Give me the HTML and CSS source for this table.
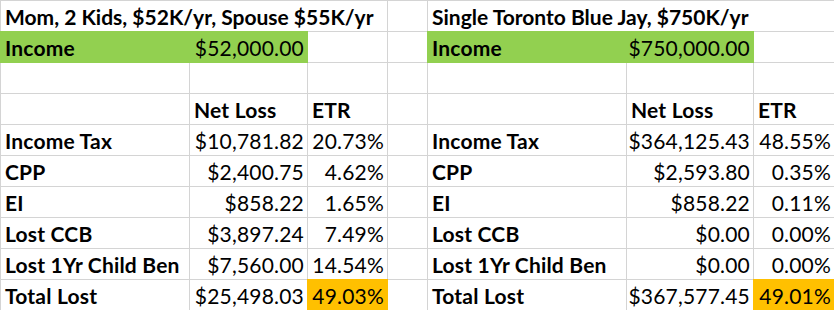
FILE: index.html
```html
<!DOCTYPE html>
<html lang="en">
<head>
<meta charset="utf-8">
<title>Tax comparison</title>
<link rel="stylesheet" href="styles.css">
</head>
<body>
<div class="sheet">
  <div class="c title span3">Mom, 2 Kids, $52K/yr, Spouse $55K/yr</div>
  <div class="c"></div>
  <div class="c title span3">Single Toronto Blue Jay, $750K/yr</div>

  <div class="c green span2 lbl-num"><span class="b">Income</span><span class="n">$52,000.00</span></div>
  <div class="c"></div>
  <div class="c"></div>
  <div class="c green span2 lbl-num"><span class="b">Income</span><span class="n">$750,000.00</span></div>
  <div class="c"></div>

  <div class="c"></div><div class="c"></div><div class="c"></div><div class="c"></div><div class="c"></div><div class="c"></div><div class="c"></div>

  <div class="c"></div><div class="c b">Net Loss</div><div class="c b">ETR</div><div class="c"></div><div class="c"></div><div class="c b">Net Loss</div><div class="c b">ETR</div>

  <div class="c b">Income Tax</div><div class="c r">$10,781.82</div><div class="c r">20.73%</div><div class="c"></div><div class="c b">Income Tax</div><div class="c r">$364,125.43</div><div class="c r">48.55%</div>

  <div class="c b">CPP</div><div class="c r">$2,400.75</div><div class="c r">4.62%</div><div class="c"></div><div class="c b">CPP</div><div class="c r">$2,593.80</div><div class="c r">0.35%</div>

  <div class="c b">EI</div><div class="c r">$858.22</div><div class="c r">1.65%</div><div class="c"></div><div class="c b">EI</div><div class="c r">$858.22</div><div class="c r">0.11%</div>

  <div class="c b">Lost CCB</div><div class="c r">$3,897.24</div><div class="c r">7.49%</div><div class="c"></div><div class="c b">Lost CCB</div><div class="c r">$0.00</div><div class="c r">0.00%</div>

  <div class="c b">Lost 1Yr Child Ben</div><div class="c r">$7,560.00</div><div class="c r">14.54%</div><div class="c"></div><div class="c b">Lost 1Yr Child Ben</div><div class="c r">$0.00</div><div class="c r">0.00%</div>

  <div class="c b">Total Lost</div><div class="c r">$25,498.03</div><div class="c r orange">49.03%</div><div class="c"></div><div class="c b">Total Lost</div><div class="c r">$367,577.45</div><div class="c r orange">49.01%</div>
</div>
</body>
</html>
```

FILE: styles.css
```css
html, body {
  margin: 0;
  padding: 0;
  background: #ffffff;
}
body {
  font-family: Lato, "Liberation Sans", sans-serif;
  font-size: 21px;
  color: #000000;
  overflow: hidden;
}
.sheet {
  display: grid;
  grid-template-columns: 188px 117px 79px 39px 198px 126px 80px;
  grid-auto-rows: 30px;
  gap: 1px;
  background: #d4d4d4;
  border-top: 1px solid #d4d4d4;
  border-left: 1px solid #d4d4d4;
  width: max-content;
}
.c {
  background: #ffffff;
  display: flex;
  align-items: flex-end;
  padding: 0 3px 3px 4px;
  line-height: 22px;
  white-space: nowrap;
  letter-spacing: 0.2px;
}
.title {
  font-weight: 700;
  letter-spacing: 0;
}
.span3 { grid-column: span 3; }
.span2 { grid-column: span 2; }
.b { font-weight: 700; }
.r { justify-content: flex-end; }
.lbl-num { justify-content: space-between; }
.green {
  background: #92d050;
  box-shadow: 0 0 0 1px #92d050;
}
.orange {
  background: #ffc000;
  box-shadow: 0 0 0 1px #ffc000;
}
```
